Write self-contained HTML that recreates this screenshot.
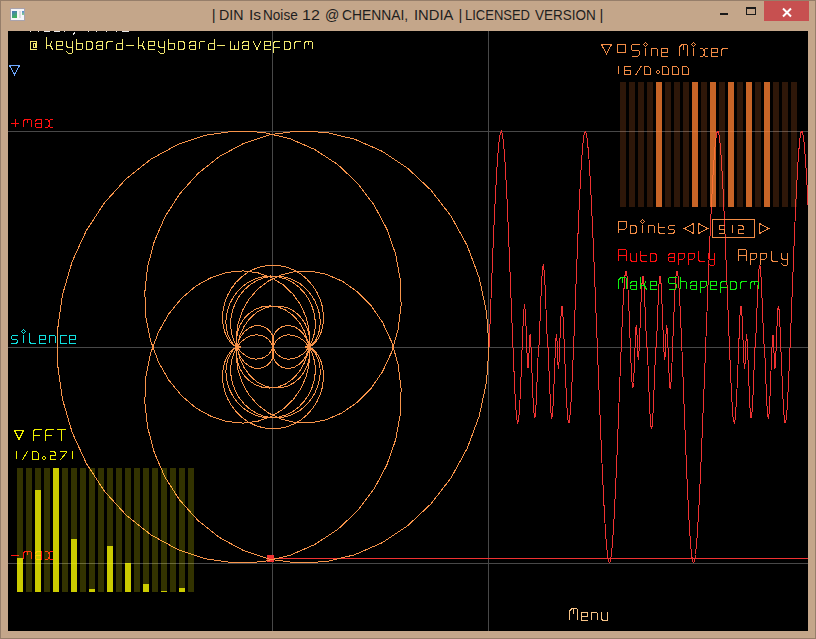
<!DOCTYPE html>
<html><head><meta charset="utf-8"><title>DIN Is Noise</title>
<style>
html,body{margin:0;padding:0}
body{width:816px;height:639px;overflow:hidden;position:relative;background:#c4a68a;font-family:"Liberation Sans",sans-serif}
#edge{position:absolute;left:0;top:0;width:814px;height:637px;border:1px solid #967e6a}
#title{position:absolute;left:0;top:5px;width:816px;height:20px;font-size:14.8px;line-height:20px;color:#1e1e1e;white-space:nowrap}
#title span{position:absolute;top:0;transform-origin:left center;white-space:nowrap}
#close{position:absolute;left:764px;top:1px;width:45px;height:20px;background:#c75050}
#client{position:absolute;left:8px;top:31px;width:800px;height:600px;background:#000;overflow:hidden}
svg{position:absolute;left:0;top:0}
svg path{fill:none;stroke-width:1}
svg path.t{stroke-linecap:square}
svg path.aa{shape-rendering:geometricPrecision}
svg circle{fill:none;stroke-width:1.15;shape-rendering:geometricPrecision}
</style></head><body>
<div id="edge"></div>
<svg width="816" height="31" viewBox="0 0 816 31" shape-rendering="crispEdges" style="z-index:2">
<defs><linearGradient id="g1" x1="0" y1="0" x2="0.4" y2="1"><stop offset="0" stop-color="#4a74c4"/><stop offset="1" stop-color="#40b45c"/></linearGradient><linearGradient id="g2" x1="0" y1="0" x2="0" y2="1"><stop offset="0" stop-color="#5a88d4"/><stop offset="1" stop-color="#84d48c"/></linearGradient></defs>
<rect x="10" y="8" width="15" height="13" fill="#a9a3ad"/><rect x="11" y="9" width="13" height="11" fill="#f6f6fa"/><rect x="12" y="11" width="5" height="7" fill="url(#g1)"/><rect x="19" y="11" width="2" height="7" fill="#dddde0"/><rect x="22" y="11" width="2" height="4" fill="url(#g2)"/>
<rect x="720" y="13" width="8" height="2" fill="#1a1a1a"/>
<rect x="746" y="7" width="10" height="2" fill="#1a1a1a"/><rect x="746" y="7" width="1" height="8" fill="#1a1a1a"/><rect x="755" y="7" width="1" height="8" fill="#1a1a1a"/><rect x="746" y="14" width="10" height="1" fill="#1a1a1a"/>
</svg>
<div id="close"><svg width="45" height="20" viewBox="0 0 45 20"><path d="M19 7.5L27 15.5M27 7.5L19 15.5" style="stroke:#fff;stroke-width:2"/></svg></div>
<div id="title"><span style="left:211.7px">|</span><span style="left:219.4px;transform:scaleX(0.961)">DIN</span><span style="left:248.5px;transform:scaleX(1.052)">Is</span><span style="left:263.1px;transform:scaleX(0.918)">Noise</span><span style="left:301.6px;transform:scaleX(1.079)">12</span><span style="left:324.5px;transform:scaleX(0.953)">@</span><span style="left:342.1px;transform:scaleX(0.936)">CHENNAI,</span><span style="left:414.0px;transform:scaleX(0.997)">INDIA</span><span style="left:458.5px">|</span><span style="left:465.2px;transform:scaleX(0.878)">LICENSED</span><span style="left:535.3px;transform:scaleX(0.914)">VERSION</span><span style="left:599.5px">|</span></div>
<div id="client">
<svg width="800" height="600" viewBox="0 0 800 600" shape-rendering="crispEdges">
<g>
<path d="M264.5 0V600M480.5 0V600M0 100.5H800M0 316.5H800M0 532.5H800" stroke="#484848"/>
<rect x="22" y="0" width="1" height="1" fill="#e8e8e8"/><rect x="30" y="0" width="1" height="1" fill="#e8e8e8"/><rect x="36" y="0" width="6" height="1" fill="#e8e8e8"/><rect x="46" y="0" width="6" height="1" fill="#e8e8e8"/><rect x="56" y="0" width="1" height="1" fill="#e8e8e8"/><rect x="80" y="0" width="1" height="1" fill="#e8e8e8"/><rect x="88" y="0" width="1" height="1" fill="#e8e8e8"/><rect x="98" y="0" width="1" height="1" fill="#e8e8e8"/><rect x="108" y="0" width="1" height="1" fill="#e8e8e8"/><rect x="114" y="0" width="7" height="1" fill="#e8e8e8"/><path d="M67 1.5L64.5 4.5" stroke="#e8e8e8"/>
<path d="M481.1 316L482.5 281L483.8 246.9L485.1 214.7L486.4 185.3L487.7 159.4L488.9 137.6L490.1 120.5L491.2 108.5L492.4 101.7L493.5 100.3L494.5 104L495.6 112.7L496.7 125.8L497.7 142.9L498.8 163.2L499.8 186L500.8 210.5L501.8 236L502.8 261.5L503.8 286.2L504.7 309.6L505.6 330.8L506.4 349.4L507.1 364.9L507.9 377L508.5 385.5L509.2 390.5L509.8 392L510.4 390.2L510.9 385.4L511.4 378.1L512 368.8L512.5 357.9L513 346.1L513.5 333.9L513.9 321.8L514.4 310.4L514.8 300.1L515.2 291.3L515.5 284.2L515.9 279.1L516.2 276L516.5 274.9L516.8 275.9L517.1 278.5L517.4 282.8L517.7 288.2L518 294.6L518.2 301.5L518.5 308.5L518.8 315.3L519 321.7L519.3 327.2L519.5 331.6L519.7 334.9L519.9 336.8L520.1 337.4L520.2 336.8L520.4 334.9L520.6 332L520.7 328.4L520.9 324.2L521.1 319.8L521.2 315.5L521.4 311.5L521.6 308.1L521.8 305.6L521.9 304.1L522.1 303.9L522.3 305L522.5 307.4L522.7 311.1L523 316L523.2 322L523.5 328.8L523.8 336.2L524.1 344L524.4 351.8L524.7 359.5L525 366.6L525.3 372.9L525.6 378.2L526 382.4L526.3 385.2L526.5 386.7L526.8 386.7L527.1 385.4L527.4 382.7L527.7 378.9L528 374.1L528.3 368.5L528.6 362.3L528.8 355.9L529.1 349.3L529.3 343L529.6 337L529.8 331.6L530 326.9L530.1 323L530.3 319.9L530.4 317.7L530.5 316.2L530.6 315.4L530.6 315.2L530.7 315.4L530.7 315.8L530.7 316.2L530.7 316.4L530.8 316.3L530.9 315.6L531 314.2L531.1 312L531.3 308.9L531.4 305L531.6 300.3L531.8 294.7L532.1 288.5L532.3 281.8L532.6 274.9L532.9 267.8L533.2 260.9L533.5 254.3L533.8 248.4L534.1 243.3L534.4 239.2L534.7 236.3L535 234.6L535.3 234.3L535.6 235.3L535.9 237.6L536.2 241.1L536.5 245.8L536.9 251.3L537.2 257.5L537.4 264.3L537.7 271.3L538 278.4L538.3 285.2L538.5 291.7L538.8 297.6L539 302.7L539.2 307.1L539.3 310.6L539.5 313.2L539.6 315L539.7 316L539.7 316.4L539.8 316.4L539.8 316L539.8 315.6L539.9 315.3L540 315.7L540 316.8L540.2 318.7L540.3 321.3L540.4 324.9L540.6 329.2L540.8 334.3L541 340L541.3 346.1L541.5 352.6L541.8 359.1L542.1 365.4L542.3 371.3L542.6 376.6L542.9 380.9L543.2 384.2L543.5 386.2L543.8 386.9L544.1 386.1L544.4 384L544.7 380.5L545 375.7L545.3 369.8L545.6 363.1L545.9 355.7L546.2 347.9L546.5 340.1L546.8 332.4L547.1 325.3L547.4 318.9L547.6 313.4L547.9 309.1L548.1 306L548.3 304.3L548.5 303.9L548.7 304.7L548.8 306.7L549 309.7L549.2 313.4L549.3 317.6L549.5 322L549.7 326.4L549.8 330.3L550 333.6L550.2 336L550.3 337.3L550.5 337.3L550.7 336L550.9 333.4L551.1 329.5L551.3 324.5L551.6 318.6L551.8 312L552.1 305L552.4 298L552.7 291.3L553 285.4L553.2 280.5L553.5 277L553.8 275.2L554.1 275.2L554.4 277.3L554.8 281.4L555.1 287.5L555.5 295.5L555.9 305.1L556.3 316L556.8 327.8L557.3 340L557.8 352.1L558.3 363.5L558.8 373.7L559.3 382L559.9 388.1L560.4 391.5L561 391.7L561.6 388.5L562.3 381.7L563 371.4L563.7 357.5L564.5 340.4L565.4 320.5L566.3 298.1L567.2 274L568.2 248.7L569.2 223.2L570.2 198.1L571.2 174.3L572.3 152.7L573.3 133.9L574.4 118.7L575.4 107.8L576.5 101.5L577.6 100.4L578.7 104.5L579.8 113.9L581 128.4L582.2 147.9L583.4 171.8L584.7 199.6L586 230.5L587.3 263.8L588.7 298.4L590 333.6L591.4 368.2L592.7 401.5L594 432.4L595.3 460.2L596.5 484.1L597.7 503.6L598.9 518.1L600.1 527.5L601.2 531.6L602.2 530.5L603.3 524.2L604.4 513.3L605.4 498.1L606.5 479.3L607.5 457.7L608.6 433.9L609.6 408.8L610.6 383.3L611.5 358L612.5 333.9L613.4 311.5L614.2 291.6L615 274.5L615.8 260.6L616.5 250.3L617.1 243.5L617.7 240.3L618.3 240.5L618.9 243.9L619.4 250L620 258.3L620.5 268.5L621 279.9L621.5 292L621.9 304.2L622.4 316L622.8 326.9L623.2 336.5L623.6 344.5L624 350.6L624.3 354.7L624.6 356.8L624.9 356.8L625.2 355L625.5 351.5L625.8 346.6L626.1 340.7L626.4 334L626.6 327L626.9 320L627.2 313.4L627.4 307.5L627.6 302.5L627.8 298.6L628 296L628.2 294.7L628.4 294.7L628.6 296L628.7 298.4L628.9 301.7L629.1 305.6L629.2 310L629.4 314.4L629.6 318.6L629.7 322.3L629.9 325.3L630.1 327.3L630.3 328.1L630.5 327.7L630.7 326L630.9 322.9L631.1 318.6L631.4 313.1L631.6 306.7L631.9 299.6L632.2 291.9L632.5 284.1L632.8 276.3L633.1 268.9L633.4 262.2L633.7 256.3L634.1 251.5L634.4 248L634.7 245.9L634.9 245.1L635.2 245.8L635.5 247.8L635.8 251.1L636.1 255.4L636.4 260.7L636.7 266.6L636.9 272.9L637.2 279.4L637.5 285.9L637.7 292L637.9 297.7L638.1 302.8L638.3 307.1L638.5 310.7L638.6 313.3L638.7 315.2L638.8 316.3L638.8 316.7L638.9 316.7L638.9 316.4L638.9 316L639 315.6L639.1 316L639.2 317L639.3 318.8L639.4 321.4L639.6 324.9L639.8 329.3L640 334.4L640.2 340.3L640.5 346.8L640.7 353.6L641 360.7L641.3 367.7L641.6 374.5L641.9 380.7L642.2 386.2L642.5 390.9L642.8 394.4L643.1 396.7L643.4 397.7L643.7 397.4L644 395.7L644.3 392.8L644.6 388.7L644.9 383.6L645.3 377.7L645.6 371.1L645.8 364.2L646.1 357.1L646.4 350.2L646.7 343.5L646.9 337.3L647.1 331.7L647.3 327L647.5 323.1L647.6 320L647.8 317.8L647.9 316.4L648 315.7L648 315.6L648 315.8L648.1 316.2L648.1 316.6L648.1 316.8L648.2 316.6L648.2 315.8L648.3 314.3L648.5 312.1L648.6 309L648.8 305.1L649 300.4L649.2 295L649.4 289L649.6 282.7L649.9 276.1L650.2 269.7L650.5 263.5L650.7 257.9L651 253.1L651.3 249.3L651.6 246.6L651.9 245.3L652.2 245.3L652.5 246.8L652.8 249.6L653.1 253.8L653.4 259.1L653.7 265.4L654 272.5L654.3 280.2L654.6 288L654.9 295.8L655.2 303.2L655.5 310L655.8 316L656 320.9L656.2 324.6L656.4 327L656.6 328.1L656.8 327.9L657 326.4L657.2 323.9L657.3 320.5L657.5 316.5L657.7 312.2L657.8 307.8L658 303.6L658.2 300L658.3 297.1L658.5 295.2L658.7 294.6L658.9 295.2L659 297.1L659.3 300.4L659.5 304.8L659.7 310.3L660 316.7L660.2 323.5L660.5 330.5L660.8 337.4L661.1 343.8L661.3 349.2L661.6 353.5L661.9 356.1L662.2 357.1L662.5 356L662.9 352.9L663.2 347.8L663.6 340.7L664 331.9L664.4 321.6L664.8 310.2L665.3 298.1L665.8 285.9L666.3 274.1L666.8 263.2L667.3 253.9L667.8 246.6L668.4 241.8L669 240L669.6 241.5L670.2 246.5L670.9 255L671.6 267.1L672.4 282.6L673.2 301.2L674.1 322.4L675 345.8L675.9 370.5L676.9 396L677.9 421.5L678.9 446L680 468.8L681 489.1L682.1 506.2L683.1 519.3L684.2 528L685.3 531.7L686.4 530.3L687.5 523.5L688.7 511.5L689.8 494.4L691.1 472.6L692.3 446.7L693.6 417.3L694.9 385.1L696.3 351L697.6 316L699 281L700.3 246.9L701.6 214.7L702.9 185.3L704.2 159.4L705.4 137.6L706.6 120.5L707.7 108.5L708.9 101.7L710 100.3L711 104L712.1 112.7L713.2 125.8L714.2 142.9L715.3 163.2L716.3 186L717.3 210.5L718.3 236L719.3 261.5L720.3 286.2L721.2 309.6L722.1 330.8L722.9 349.4L723.6 364.9L724.4 377L725 385.5L725.7 390.5L726.3 392L726.9 390.2L727.4 385.4L727.9 378.1L728.5 368.8L729 357.9L729.5 346.1L730 333.9L730.4 321.8L730.9 310.4L731.3 300.1L731.7 291.3L732 284.2L732.4 279.1L732.7 276L733 274.9L733.3 275.9L733.6 278.5L733.9 282.8L734.2 288.2L734.5 294.6L734.7 301.5L735 308.5L735.3 315.3L735.5 321.7L735.8 327.2L736 331.6L736.2 334.9L736.4 336.8L736.6 337.4L736.7 336.8L736.9 334.9L737.1 332L737.2 328.4L737.4 324.2L737.6 319.8L737.7 315.5L737.9 311.5L738.1 308.1L738.3 305.6L738.4 304.1L738.6 303.9L738.8 305L739 307.4L739.2 311.1L739.5 316L739.7 322L740 328.8L740.3 336.2L740.6 344L740.9 351.8L741.2 359.5L741.5 366.6L741.8 372.9L742.1 378.2L742.5 382.4L742.8 385.2L743 386.7L743.3 386.7L743.6 385.4L743.9 382.7L744.2 378.9L744.5 374.1L744.8 368.5L745.1 362.3L745.3 355.9L745.6 349.3L745.8 343L746.1 337L746.3 331.6L746.5 326.9L746.6 323L746.8 319.9L746.9 317.7L747 316.2L747.1 315.4L747.1 315.2L747.2 315.4L747.2 315.8L747.2 316.2L747.2 316.4L747.3 316.3L747.4 315.6L747.5 314.2L747.6 312L747.8 308.9L747.9 305L748.1 300.3L748.3 294.7L748.6 288.5L748.8 281.8L749.1 274.9L749.4 267.8L749.7 260.9L750 254.3L750.3 248.4L750.6 243.3L750.9 239.2L751.2 236.3L751.5 234.6L751.8 234.3L752.1 235.3L752.4 237.6L752.7 241.1L753 245.8L753.4 251.3L753.7 257.5L753.9 264.3L754.2 271.3L754.5 278.4L754.8 285.2L755 291.7L755.3 297.6L755.5 302.7L755.7 307.1L755.8 310.6L756 313.2L756.1 315L756.2 316L756.2 316.4L756.3 316.4L756.3 316L756.3 315.6L756.4 315.3L756.5 315.7L756.5 316.8L756.7 318.7L756.8 321.3L756.9 324.9L757.1 329.2L757.3 334.3L757.5 340L757.8 346.1L758 352.6L758.3 359.1L758.6 365.4L758.8 371.3L759.1 376.6L759.4 380.9L759.7 384.2L760 386.2L760.3 386.9L760.6 386.1L760.9 384L761.2 380.5L761.5 375.7L761.8 369.8L762.1 363.1L762.4 355.7L762.7 347.9L763 340.1L763.3 332.4L763.6 325.3L763.9 318.9L764.1 313.4L764.4 309.1L764.6 306L764.8 304.3L765 303.9L765.2 304.7L765.3 306.7L765.5 309.7L765.7 313.4L765.8 317.6L766 322L766.2 326.4L766.3 330.3L766.5 333.6L766.7 336L766.8 337.3L767 337.3L767.2 336L767.4 333.4L767.6 329.5L767.8 324.5L768.1 318.6L768.3 312L768.6 305L768.9 298L769.2 291.3L769.5 285.4L769.7 280.5L770 277L770.3 275.2L770.6 275.2L770.9 277.3L771.3 281.4L771.6 287.5L772 295.5L772.4 305.1L772.8 316L773.3 327.8L773.8 340L774.3 352.1L774.8 363.5L775.3 373.7L775.8 382L776.4 388.1L776.9 391.5L777.5 391.7L778.1 388.5L778.8 381.7L779.5 371.4L780.2 357.5L781 340.4L781.9 320.5L782.8 298.1L783.7 274L784.7 248.7L785.7 223.2L786.7 198.1L787.7 174.3L788.8 152.7L789.8 133.9L790.9 118.7L791.9 107.8L793 101.5L794.1 100.4L795.2 104.5L796.3 113.9L797.5 128.4L798.7 147.9L799.9 171.8L801.2 199.6L802.5 230.5L803.8 263.8L805.2 298.4" stroke="#f03232"/>
<path d="M264 527.5H800" stroke="#f03232"/>
<rect x="259" y="524" width="7" height="7" fill="#f03232"/>
<path d="M481 316L478.5 280.9L471.2 246.8L459.2 214.6L443 185.1L422.9 159.1L399.7 137.3L374 120.2L346.6 108.2L318.2 101.4L289.7 100L261.9 103.7L235.6 112.4L211.3 125.6L189.9 142.6L171.6 163L157 185.8L146.3 210.4L139.6 235.8L136.8 261.4L137.9 286.2L142.6 309.6L150.4 330.8L161 349.4L173.8 364.9L188.1 377.1L203.5 385.6L219.3 390.6L234.9 392.1L249.7 390.3L263.2 385.5L275.1 378.2L285 368.8L292.7 358L298 346.1L300.9 333.9L301.5 321.8L300 310.4L296.4 300.1L291.3 291.2L284.8 284.2L277.5 279L269.7 275.9L261.7 274.9L254 275.8L246.9 278.5L240.7 282.7L235.6 288.2L231.9 294.5L229.5 301.4L228.5 308.5L228.9 315.3L230.5 321.7L233.3 327.2L236.8 331.7L241 334.9L245.6 336.9L250.2 337.5L254.6 336.8L258.5 334.9L261.7 332.1L264.1 328.4L265.4 324.2L265.7 319.8L264.8 315.5L262.9 311.5L260 308.1L256.3 305.6L252 304.1L247.2 303.9L242.3 305L237.5 307.4L232.9 311.1L229 316L225.9 322L223.7 328.8L222.7 336.3L222.9 344L224.4 351.9L227.1 359.5L231.1 366.6L236.1 373L242.1 378.3L248.8 382.5L256.1 385.3L263.7 386.8L271.4 386.8L278.8 385.5L285.9 382.8L292.4 379L298.1 374.1L302.9 368.5L306.7 362.4L309.5 355.9L311.3 349.4L312.1 343L312 337.1L311.1 331.7L309.6 326.9L307.8 323L305.6 319.9L303.4 317.7L301.4 316.2L299.6 315.4L298.3 315.2L297.4 315.4L297.2 315.8L297.6 316.2L298.5 316.4L300.1 316.3L302 315.6L304.3 314.2L306.8 312L309.3 308.9L311.6 305L313.5 300.2L314.8 294.7L315.5 288.5L315.2 281.8L314.1 274.8L311.9 267.7L308.7 260.8L304.4 254.3L299.1 248.3L293 243.2L286.2 239.1L278.8 236.2L271 234.5L263 234.2L255.1 235.2L247.5 237.5L240.3 241L233.8 245.7L228.1 251.2L223.4 257.5L219.6 264.2L216.9 271.3L215.2 278.3L214.5 285.2L214.8 291.7L215.8 297.5L217.4 302.7L219.5 307.1L221.9 310.6L224.4 313.2L226.8 315L229 316L230.8 316.4L232 316.4L232.7 316L232.8 315.6L232.2 315.3L231.1 315.3L229.5 315.7L227.6 316.8L225.5 318.7L223.3 321.4L221.3 324.9L219.6 329.2L218.4 334.3L217.9 340L218.2 346.2L219.5 352.6L221.8 359.2L225.1 365.5L229.4 371.4L234.6 376.7L240.8 381L247.6 384.3L254.9 386.3L262.4 387L270.1 386.2L277.6 384.1L284.6 380.6L291 375.8L296.5 369.9L301.1 363.1L304.4 355.7L306.5 348L307.4 340.1L306.9 332.5L305.3 325.3L302.7 318.9L299.1 313.4L294.9 309.1L290.1 306L285.2 304.3L280.3 303.8L275.8 304.7L271.7 306.7L268.4 309.7L266 313.4L264.6 317.6L264.3 322L265.1 326.4L267 330.3L269.8 333.6L273.4 336L277.6 337.3L282.1 337.3L286.7 336L291.1 333.4L295 329.6L298.2 324.5L300.4 318.6L301.5 312L301.2 305L299.5 297.9L296.4 291.3L292 285.3L286.3 280.4L279.6 276.9L272.2 275.1L264.3 275.2L256.4 277.2L248.7 281.3L241.8 287.5L236 295.5L231.6 305.1L229 316L228.5 327.8L230.2 340L234.3 352.1L240.8 363.6L249.6 373.7L260.6 382.1L273.4 388.2L287.6 391.6L302.9 391.8L318.6 388.6L334.2 381.8L349.2 371.4L362.9 357.6L374.6 340.5L383.9 320.5L390.2 298.1L393.1 273.9L392.3 248.7L387.6 223.1L378.8 197.9L366.1 174.1L349.7 152.4L329.8 133.6L306.8 118.5L281.5 107.5L254.3 101.2L226.1 100.1L197.5 104.2L169.5 113.6L142.9 128.2L118.3 147.7L96.6 171.6L78.4 199.5L64.2 230.4L54.5 263.7L49.6 298.4L49.6 333.6L54.5 368.3L64.2 401.6L78.4 432.5L96.6 460.4L118.3 484.3L142.9 503.8L169.5 518.4L197.5 527.8L226.1 531.9L254.3 530.8L281.5 524.5L306.8 513.5L329.8 498.4L349.7 479.6L366.1 457.9L378.8 434.1L387.6 408.9L392.3 383.3L393.1 358.1L390.2 333.9L383.9 311.5L374.6 291.5L362.9 274.4L349.2 260.6L334.2 250.2L318.6 243.4L302.9 240.2L287.6 240.4L273.4 243.8L260.6 249.9L249.6 258.3L240.8 268.4L234.3 279.9L230.2 292L228.5 304.2L229 316L231.6 326.9L236 336.5L241.8 344.5L248.7 350.7L256.4 354.8L264.3 356.8L272.2 356.9L279.6 355.1L286.3 351.6L292 346.7L296.4 340.7L299.5 334.1L301.2 327L301.5 320L300.4 313.4L298.2 307.5L295 302.4L291.1 298.6L286.7 296L282.1 294.7L277.6 294.7L273.4 296L269.8 298.4L267 301.7L265.1 305.6L264.3 310L264.6 314.4L266 318.6L268.4 322.3L271.7 325.3L275.8 327.3L280.3 328.2L285.2 327.7L290.1 326L294.9 322.9L299.1 318.6L302.7 313.1L305.3 306.7L306.9 299.5L307.4 291.9L306.5 284L304.4 276.3L301.1 268.9L296.5 262.1L291 256.2L284.6 251.4L277.6 247.9L270.1 245.8L262.4 245L254.9 245.7L247.6 247.7L240.8 251L234.6 255.3L229.4 260.6L225.1 266.5L221.8 272.8L219.5 279.4L218.2 285.8L217.9 292L218.4 297.7L219.6 302.8L221.3 307.1L223.3 310.6L225.5 313.3L227.6 315.2L229.5 316.3L231.1 316.7L232.2 316.7L232.8 316.4L232.7 316L232 315.6L230.8 315.6L229 316L226.8 317L224.4 318.8L221.9 321.4L219.5 324.9L217.4 329.3L215.8 334.5L214.8 340.3L214.5 346.8L215.2 353.7L216.9 360.7L219.6 367.8L223.4 374.5L228.1 380.8L233.8 386.3L240.3 391L247.5 394.5L255.1 396.8L263 397.8L271 397.5L278.8 395.8L286.2 392.9L293 388.8L299.1 383.7L304.4 377.7L308.7 371.2L311.9 364.3L314.1 357.2L315.2 350.2L315.5 343.5L314.8 337.3L313.5 331.8L311.6 327L309.3 323.1L306.8 320L304.3 317.8L302 316.4L300.1 315.7L298.5 315.6L297.6 315.8L297.2 316.2L297.4 316.6L298.3 316.8L299.6 316.6L301.4 315.8L303.4 314.3L305.6 312.1L307.8 309L309.6 305.1L311.1 300.3L312 294.9L312.1 289L311.3 282.6L309.5 276.1L306.7 269.6L302.9 263.5L298.1 257.9L292.4 253L285.9 249.2L278.8 246.5L271.4 245.2L263.7 245.2L256.1 246.7L248.8 249.5L242.1 253.7L236.1 259L231.1 265.4L227.1 272.5L224.4 280.1L222.9 288L222.7 295.7L223.7 303.2L225.9 310L229 316L232.9 320.9L237.5 324.6L242.3 327L247.2 328.1L252 327.9L256.3 326.4L260 323.9L262.9 320.5L264.8 316.5L265.7 312.2L265.4 307.8L264.1 303.6L261.7 299.9L258.5 297.1L254.6 295.2L250.2 294.5L245.6 295.1L241 297.1L236.8 300.3L233.3 304.8L230.5 310.3L228.9 316.7L228.5 323.5L229.5 330.6L231.9 337.5L235.6 343.8L240.7 349.3L246.9 353.5L254 356.2L261.7 357.1L269.7 356.1L277.5 353L284.8 347.8L291.3 340.8L296.4 331.9L300 321.6L301.5 310.2L300.9 298.1L298 285.9L292.7 274L285 263.2L275.1 253.8L263.2 246.5L249.7 241.7L234.9 239.9L219.3 241.4L203.5 246.4L188.1 254.9L173.8 267.1L161 282.6L150.4 301.2L142.6 322.4L137.9 345.8L136.8 370.6L139.6 396.2L146.3 421.6L157 446.2L171.6 469L189.9 489.4L211.3 506.4L235.6 519.6L261.9 528.3L289.7 532L318.2 530.6L346.6 523.8L374 511.8L399.7 494.7L422.9 472.9L443 446.9L459.2 417.4L471.2 385.2L478.5 351.1L481 316Z" stroke="#f8944a"/>
<rect x="612" y="51" width="6" height="125" fill="rgba(255,128,50,0.18)"/><rect x="621" y="51" width="6" height="125" fill="rgba(255,128,50,0.18)"/><rect x="630" y="51" width="6" height="125" fill="rgba(255,128,50,0.18)"/><rect x="639" y="51" width="6" height="125" fill="rgba(255,128,50,0.18)"/><rect x="648" y="51" width="6" height="125" fill="rgba(255,128,50,0.78)"/><rect x="657" y="51" width="6" height="125" fill="rgba(255,128,50,0.18)"/><rect x="666" y="51" width="6" height="125" fill="rgba(255,128,50,0.18)"/><rect x="675" y="51" width="6" height="125" fill="rgba(255,128,50,0.18)"/><rect x="684" y="51" width="6" height="125" fill="rgba(255,128,50,0.78)"/><rect x="693" y="51" width="6" height="125" fill="rgba(255,128,50,0.18)"/><rect x="702" y="51" width="6" height="125" fill="rgba(255,128,50,0.78)"/><rect x="711" y="51" width="6" height="125" fill="rgba(255,128,50,0.18)"/><rect x="720" y="51" width="6" height="125" fill="rgba(255,128,50,0.78)"/><rect x="729" y="51" width="6" height="125" fill="rgba(255,128,50,0.18)"/><rect x="738" y="51" width="6" height="125" fill="rgba(255,128,50,0.78)"/><rect x="747" y="51" width="6" height="125" fill="rgba(255,128,50,0.18)"/><rect x="756" y="51" width="6" height="125" fill="rgba(255,128,50,0.78)"/><rect x="765" y="51" width="6" height="125" fill="rgba(255,128,50,0.18)"/><rect x="774" y="51" width="6" height="125" fill="rgba(255,128,50,0.18)"/><rect x="783" y="51" width="6" height="125" fill="rgba(255,128,50,0.18)"/>
<path class="t" d="M28.5 18.5L22.5 18.5L22.5 10.5L28.5 10.5L28.5 16.5L25.5 16.5L25.5 12.5L27.5 12.5L27.5 15.5M38.5 17.5L38.5 6.5M38.5 14.5L42.5 14.5L43.5 10.5M42.5 14.5L44.5 18.5M54.5 18.5L48.5 18.5L48.5 10.5L54.5 10.5L54.5 14.5L48.5 14.5M58.5 10.5L58.5 15L60 16.5L64.5 16.5M64.5 10.5L64.5 21.5L63.5 22.5L60.5 22.5L58.5 20.5M68.5 8.5L68.5 18.5L73.5 18.5L74.5 17.5L74.5 12.5L68.5 12.5M78.5 18.5L78.5 10.5L83 10.5L84.5 12L84.5 17L83 18.5L78.5 18.5M88.5 12L90 10.5L94.5 10.5L94.5 18.5L89.5 18.5L88.5 17.5L88.5 14.5L94.5 14.5M98.5 17.5L98.5 12L100 10.5L104 10.5M114.5 8.5L114.5 18.5L108.5 18.5L108.5 13.5L109.5 12.5L114.5 12.5M118.5 14.5L125.5 14.5M130.5 17.5L130.5 6.5M130.5 14.5L134.5 14.5L135.5 10.5M134.5 14.5L136.5 18.5M146.5 18.5L140.5 18.5L140.5 10.5L146.5 10.5L146.5 14.5L140.5 14.5M150.5 10.5L150.5 15L152 16.5L156.5 16.5M156.5 10.5L156.5 21.5L155.5 22.5L152.5 22.5L150.5 20.5M160.5 8.5L160.5 18.5L165.5 18.5L166.5 17.5L166.5 12.5L160.5 12.5M170.5 18.5L170.5 10.5L175 10.5L176.5 12L176.5 17L175 18.5L170.5 18.5M181.5 12L183 10.5L187.5 10.5L187.5 18.5L182.5 18.5L181.5 17.5L181.5 14.5L187.5 14.5M191 17.5L191 12L192.5 10.5L196.5 10.5M206.5 8.5L206.5 18.5L200.5 18.5L200.5 13.5L201.5 12.5L206.5 12.5M209.5 14.5L216.5 14.5M222.5 10.5L222.5 18.5L230.5 18.5L230.5 10.5M226.5 17.5L226.5 14.5M234.5 12L236 10.5L240.5 10.5L240.5 18.5L235.5 18.5L234.5 17.5L234.5 14.5L240.5 14.5M245.5 10.5L249 18.5L252.5 10.5M262.5 18.5L256.5 18.5L256.5 10.5L262.5 10.5L262.5 14.5L256.5 14.5M271.5 10.5L267 10.5L265.5 12L265.5 21.5M265.5 16.5L271.5 16.5M276.5 18.5L276.5 10.5L281 10.5L282.5 12L282.5 17L281 18.5L276.5 18.5M286.5 17.5L286.5 12L288 10.5L292 10.5M296.5 17.5L296.5 12L298 10.5L303.5 10.5L304.5 11.5L304.5 17.5M300.5 10.5L300.5 13.5" stroke="#f2e870"/>
<path class="t" d="M631.5 13.5L624.5 13.5L623.5 14.5L623.5 18.5L624.5 19.5L630.5 19.5L631.5 20.5L631.5 23.5L629.5 25.5L624.5 25.5M637.5 24.5L637.5 17.5M643.5 24.5L643.5 17.5L648.5 17.5L649.5 18.5L649.5 24.5M659.5 25.5L653.5 25.5L653.5 17.5L659.5 17.5L659.5 21.5L653.5 21.5M671.5 24.5L671.5 16L674 13.5L678.5 13.5L679.5 14.5L679.5 24.5M675.5 13.5L675.5 18.5M685.5 24.5L685.5 17.5M692.5 17.5L694.5 17.5L696 19.5L696 23.5L694.5 25.5L692.5 25.5M699.5 17.5L697.5 17.5L696 19.5M696 23.5L697.5 25.5L699.5 25.5M709.5 25.5L703.5 25.5L703.5 17.5L709.5 17.5L709.5 21.5L703.5 21.5M713.5 24.5L713.5 19L715 17.5L719 17.5" stroke="#f28c46"/><rect x="637" y="11" width="1" height="1" fill="#f28c46"/><rect x="636" y="12" width="1" height="1" fill="#f28c46"/><rect x="638" y="12" width="1" height="1" fill="#f28c46"/><rect x="635" y="13" width="1" height="1" fill="#f28c46"/><rect x="639" y="13" width="1" height="1" fill="#f28c46"/><rect x="636" y="14" width="1" height="1" fill="#f28c46"/><rect x="638" y="14" width="1" height="1" fill="#f28c46"/><rect x="637" y="15" width="1" height="1" fill="#f28c46"/><rect x="685" y="11" width="1" height="1" fill="#f28c46"/><rect x="684" y="12" width="1" height="1" fill="#f28c46"/><rect x="686" y="12" width="1" height="1" fill="#f28c46"/><rect x="683" y="13" width="1" height="1" fill="#f28c46"/><rect x="687" y="13" width="1" height="1" fill="#f28c46"/><rect x="684" y="14" width="1" height="1" fill="#f28c46"/><rect x="686" y="14" width="1" height="1" fill="#f28c46"/><rect x="685" y="15" width="1" height="1" fill="#f28c46"/>
<path class="t" d="M610.5 42.5L610.5 35.5M622.5 35.5L616.5 35.5L616.5 43.5L622.5 43.5L622.5 39.5L616.5 39.5M628 43.5L633 35.5M636.5 43.5L636.5 35.5L640.5 35.5L642.5 37.5L642.5 43.5L636.5 43.5M654.5 43.5L654.5 35.5L658.5 35.5L660.5 37.5L660.5 43.5L654.5 43.5M664.5 43.5L664.5 35.5L668.5 35.5L670.5 37.5L670.5 43.5L664.5 43.5M674.5 43.5L674.5 35.5L678.5 35.5L680.5 37.5L680.5 43.5L674.5 43.5" stroke="#f28c46"/><rect x="649" y="39" width="1" height="1" fill="#f28c46"/><rect x="650" y="39" width="1" height="1" fill="#f28c46"/><rect x="648" y="40" width="1" height="1" fill="#f28c46"/><rect x="651" y="40" width="1" height="1" fill="#f28c46"/><rect x="648" y="41" width="1" height="1" fill="#f28c46"/><rect x="651" y="41" width="1" height="1" fill="#f28c46"/><rect x="649" y="42" width="1" height="1" fill="#f28c46"/><rect x="650" y="42" width="1" height="1" fill="#f28c46"/>
<path class="t" d="M610.5 201.5L610.5 190.5L618.5 190.5L618.5 196.5L616.5 198.5L610.5 198.5M622.5 202.5L622.5 194.5L627 194.5L628.5 196L628.5 201L627 202.5L622.5 202.5M634.5 201.5L634.5 194.5M640.5 201.5L640.5 194.5L645.5 194.5L646.5 195.5L646.5 201.5M650.5 192.5L650.5 201L652 202.5L656.5 202.5M650.5 196.5L656.5 196.5M666.5 194.5L661.5 194.5L660.5 195.5L660.5 197.5L661.5 198.5L665.5 198.5L666.5 199.5L666.5 201L665 202.5L660.5 202.5" stroke="#f28c46"/><rect x="634" y="188" width="1" height="1" fill="#f28c46"/><rect x="633" y="189" width="1" height="1" fill="#f28c46"/><rect x="635" y="189" width="1" height="1" fill="#f28c46"/><rect x="632" y="190" width="1" height="1" fill="#f28c46"/><rect x="636" y="190" width="1" height="1" fill="#f28c46"/><rect x="633" y="191" width="1" height="1" fill="#f28c46"/><rect x="635" y="191" width="1" height="1" fill="#f28c46"/><rect x="634" y="192" width="1" height="1" fill="#f28c46"/>
<path class="t" d="M716.5 194.5L711.5 194.5L711.5 198.5L716.5 198.5L716.5 202.5L711.5 202.5M724.5 201.5L724.5 194.5M730.5 194.5L734 194.5L735.5 196L735.5 198.5L730.5 198.5L730.5 202.5L735.5 202.5" stroke="#f28c46"/>
<path class="t" d="M610.5 229.5L610.5 218.5L617.5 218.5L618.5 219.5L618.5 229.5M610.5 224.5L618.5 224.5M622.5 222.5L622.5 229L624 230.5L628.5 230.5L628.5 222.5M632.5 220.5L632.5 229L634 230.5L638.5 230.5M632.5 224.5L638.5 224.5M642.5 230.5L642.5 222.5L647 222.5L648.5 224L648.5 229L647 230.5L642.5 230.5M660.5 224L662 222.5L666.5 222.5L666.5 230.5L661.5 230.5L660.5 229.5L660.5 226.5L666.5 226.5M670.5 233.5L670.5 222.5L676.5 222.5L676.5 226.5L674.5 228.5L670.5 228.5M680.5 233.5L680.5 222.5L686.5 222.5L686.5 226.5L684.5 228.5L680.5 228.5M690.5 220.5L690.5 229L692 230.5L696.5 230.5M700.5 222.5L700.5 227L702 228.5L706.5 228.5M706.5 222.5L706.5 233.5L705.5 234.5L702.5 234.5L700.5 232.5" stroke="#ff1010"/>
<path class="t" d="M730.5 229.5L730.5 218.5L737.5 218.5L738.5 219.5L738.5 229.5M730.5 224.5L738.5 224.5M742.5 233.5L742.5 222.5L748.5 222.5L748.5 226.5L746.5 228.5L742.5 228.5M752.5 233.5L752.5 222.5L758.5 222.5L758.5 226.5L756.5 228.5L752.5 228.5M763.5 220.5L763.5 229L765 230.5L769.5 230.5M773.5 222.5L773.5 227L775 228.5L779.5 228.5M779.5 222.5L779.5 233.5L778.5 234.5L775.5 234.5L773.5 232.5" stroke="#f28c46"/>
<path class="t" d="M610.5 257.5L610.5 249L613 246.5L617.5 246.5L618.5 247.5L618.5 257.5M614.5 246.5L614.5 251.5M622.5 252L624 250.5L628.5 250.5L628.5 258.5L623.5 258.5L622.5 257.5L622.5 254.5L628.5 254.5M632.5 257.5L632.5 246.5M632.5 254.5L636.5 254.5L637.5 250.5M636.5 254.5L638.5 258.5M648.5 258.5L642.5 258.5L642.5 250.5L648.5 250.5L648.5 254.5L642.5 254.5M668.5 246.5L661.5 246.5L660.5 247.5L660.5 251.5L661.5 252.5L667.5 252.5L668.5 253.5L668.5 256.5L666.5 258.5L661.5 258.5M672.5 246.5L672.5 257.5M672.5 250.5L677.5 250.5L678.5 251.5L678.5 257.5M682.5 252L684 250.5L688.5 250.5L688.5 258.5L683.5 258.5L682.5 257.5L682.5 254.5L688.5 254.5M692.5 261.5L692.5 250.5L698.5 250.5L698.5 254.5L696.5 256.5L692.5 256.5M708.5 258.5L702.5 258.5L702.5 250.5L708.5 250.5L708.5 254.5L702.5 254.5M718.5 250.5L714 250.5L712.5 252L712.5 261.5M712.5 256.5L718.5 256.5M722.5 258.5L722.5 250.5L727 250.5L728.5 252L728.5 257L727 258.5L722.5 258.5M732.5 257.5L732.5 252L734 250.5L738 250.5M742.5 257.5L742.5 252L744 250.5L749.5 250.5L750.5 251.5L750.5 257.5M746.5 250.5L746.5 253.5" stroke="#10f010"/>
<path class="t" d="M3.5 92.5L10.5 92.5M7.5 95.5L7.5 88.5M15.5 95.5L15.5 90L17 88.5L22.5 88.5L23.5 89.5L23.5 95.5M19.5 88.5L19.5 91.5M27.5 90L29 88.5L33.5 88.5L33.5 96.5L28.5 96.5L27.5 95.5L27.5 92.5L33.5 92.5M37.5 88.5L39.5 88.5L41 90.5L41 94.5L39.5 96.5L37.5 96.5M44.5 88.5L42.5 88.5L41 90.5M41 94.5L42.5 96.5L44.5 96.5" stroke="#ff1010"/>
<path class="t" d="M9.5 304.5L4.5 304.5L3.5 305.5L3.5 307.5L4.5 308.5L8.5 308.5L9.5 309.5L9.5 311L8 312.5L3.5 312.5M15.5 311.5L15.5 304.5M21.5 302.5L21.5 311L23 312.5L27.5 312.5M37.5 312.5L31.5 312.5L31.5 304.5L37.5 304.5L37.5 308.5L31.5 308.5M41.5 311.5L41.5 304.5L46.5 304.5L47.5 305.5L47.5 311.5M58.5 304.5L52.5 304.5L52.5 312.5L58.5 312.5M67.5 312.5L61.5 312.5L61.5 304.5L67.5 304.5L67.5 308.5L61.5 308.5" stroke="#10e0e0"/><rect x="15" y="298" width="1" height="1" fill="#10e0e0"/><rect x="14" y="299" width="1" height="1" fill="#10e0e0"/><rect x="16" y="299" width="1" height="1" fill="#10e0e0"/><rect x="13" y="300" width="1" height="1" fill="#10e0e0"/><rect x="17" y="300" width="1" height="1" fill="#10e0e0"/><rect x="14" y="301" width="1" height="1" fill="#10e0e0"/><rect x="16" y="301" width="1" height="1" fill="#10e0e0"/><rect x="15" y="302" width="1" height="1" fill="#10e0e0"/>
<path class="t" d="M3.5 524.5L10.5 524.5M15.5 527.5L15.5 522L17 520.5L22.5 520.5L23.5 521.5L23.5 527.5M19.5 520.5L19.5 523.5M27.5 522L29 520.5L33.5 520.5L33.5 528.5L28.5 528.5L27.5 527.5L27.5 524.5L33.5 524.5M37.5 520.5L39.5 520.5L41 522.5L41 526.5L39.5 528.5L37.5 528.5M44.5 520.5L42.5 520.5L41 522.5M41 526.5L42.5 528.5L44.5 528.5" stroke="#ff1010"/>
<path class="t" d="M33 398.5L27 398.5L25.5 400L25.5 409.5M25.5 404.5L31.5 404.5M45 398.5L39 398.5L37.5 400L37.5 409.5M37.5 404.5L43.5 404.5M49.5 398.5L57 398.5M53.2 398.5L53.2 409.5" stroke="#f0f000"/>
<path class="t" d="M8.5 427.5L8.5 420.5M14.5 428.5L19.5 420.5M24.5 428.5L24.5 420.5L28.5 420.5L30.5 422.5L30.5 428.5L24.5 428.5M42.5 420.5L46 420.5L47.5 422L47.5 424.5L42.5 424.5L42.5 428.5L47.5 428.5M52.5 420.5L58.5 420.5L58.5 421.5L52.5 428.5M64.5 427.5L64.5 420.5" stroke="#f0f000"/><rect x="35" y="425" width="1" height="1" fill="#f0f000"/><rect x="36" y="425" width="1" height="1" fill="#f0f000"/><rect x="34" y="426" width="1" height="1" fill="#f0f000"/><rect x="37" y="426" width="1" height="1" fill="#f0f000"/><rect x="34" y="427" width="1" height="1" fill="#f0f000"/><rect x="37" y="427" width="1" height="1" fill="#f0f000"/><rect x="35" y="428" width="1" height="1" fill="#f0f000"/><rect x="36" y="428" width="1" height="1" fill="#f0f000"/>
<path class="t" d="M561.5 588.5L561.5 580L564 577.5L568.5 577.5L569.5 578.5L569.5 588.5M565.5 577.5L565.5 582.5M579.5 589.5L573.5 589.5L573.5 581.5L579.5 581.5L579.5 585.5L573.5 585.5M583.5 588.5L583.5 581.5L588.5 581.5L589.5 582.5L589.5 588.5M593.5 581.5L593.5 588L595 589.5L599.5 589.5L599.5 581.5" stroke="#f8c488"/>
<path d="M1.5 34.5L11.5 34.5L6.5 43.5Z" stroke="#6ea8ff"/>
<path d="M593.5 13.5L603.5 13.5L598.5 23Z" stroke="#f28c46"/>
<path d="M609.5 13.5L617.5 13.5L617.5 21.5L609.5 21.5Z" stroke="#f28c46"/>
<path d="M6.5 399.5L15.5 399.5L11 408.5Z" stroke="#f0f000"/>
<path d="M676.5 197.5L685.5 192.5L685.5 202.5Z" stroke="#f28c46"/>
<path d="M690.5 192.5L699.5 197.5L690.5 202.5Z" stroke="#f28c46"/>
<path d="M751.5 192.5L760.5 197.5L751.5 202.5Z" stroke="#f28c46"/>
<path d="M704.5 188.5L746.5 188.5L746.5 206.5L704.5 206.5Z" stroke="#f28c46"/>
<rect x="9" y="437" width="6" height="124" fill="rgba(255,255,0,0.2)"/><rect x="9" y="527" width="6" height="34" fill="rgba(255,255,0,0.75)"/><rect x="18" y="437" width="6" height="124" fill="rgba(255,255,0,0.2)"/><rect x="27" y="437" width="6" height="124" fill="rgba(255,255,0,0.2)"/><rect x="27" y="459" width="6" height="102" fill="rgba(255,255,0,0.75)"/><rect x="36" y="437" width="6" height="124" fill="rgba(255,255,0,0.2)"/><rect x="45" y="437" width="6" height="124" fill="rgba(255,255,0,0.2)"/><rect x="45" y="437" width="6" height="124" fill="rgba(255,255,0,0.75)"/><rect x="54" y="437" width="6" height="124" fill="rgba(255,255,0,0.2)"/><rect x="63" y="437" width="6" height="124" fill="rgba(255,255,0,0.2)"/><rect x="63" y="508" width="6" height="53" fill="rgba(255,255,0,0.75)"/><rect x="72" y="437" width="6" height="124" fill="rgba(255,255,0,0.2)"/><rect x="81" y="437" width="6" height="124" fill="rgba(255,255,0,0.2)"/><rect x="81" y="558" width="6" height="3" fill="rgba(255,255,0,0.75)"/><rect x="90" y="437" width="6" height="124" fill="rgba(255,255,0,0.2)"/><rect x="99" y="437" width="6" height="124" fill="rgba(255,255,0,0.2)"/><rect x="99" y="515" width="6" height="46" fill="rgba(255,255,0,0.75)"/><rect x="108" y="437" width="6" height="124" fill="rgba(255,255,0,0.2)"/><rect x="117" y="437" width="6" height="124" fill="rgba(255,255,0,0.2)"/><rect x="117" y="532" width="6" height="29" fill="rgba(255,255,0,0.75)"/><rect x="126" y="437" width="6" height="124" fill="rgba(255,255,0,0.2)"/><rect x="135" y="437" width="6" height="124" fill="rgba(255,255,0,0.2)"/><rect x="135" y="553" width="6" height="8" fill="rgba(255,255,0,0.75)"/><rect x="144" y="437" width="6" height="124" fill="rgba(255,255,0,0.2)"/><rect x="153" y="437" width="6" height="124" fill="rgba(255,255,0,0.2)"/><rect x="153" y="560" width="6" height="1" fill="rgba(255,255,0,0.75)"/><rect x="162" y="437" width="6" height="124" fill="rgba(255,255,0,0.2)"/><rect x="171" y="437" width="6" height="124" fill="rgba(255,255,0,0.2)"/><rect x="171" y="557" width="6" height="4" fill="rgba(255,255,0,0.75)"/><rect x="180" y="437" width="6" height="124" fill="rgba(255,255,0,0.2)"/>
</g>
</svg>
</div>
</body></html>
